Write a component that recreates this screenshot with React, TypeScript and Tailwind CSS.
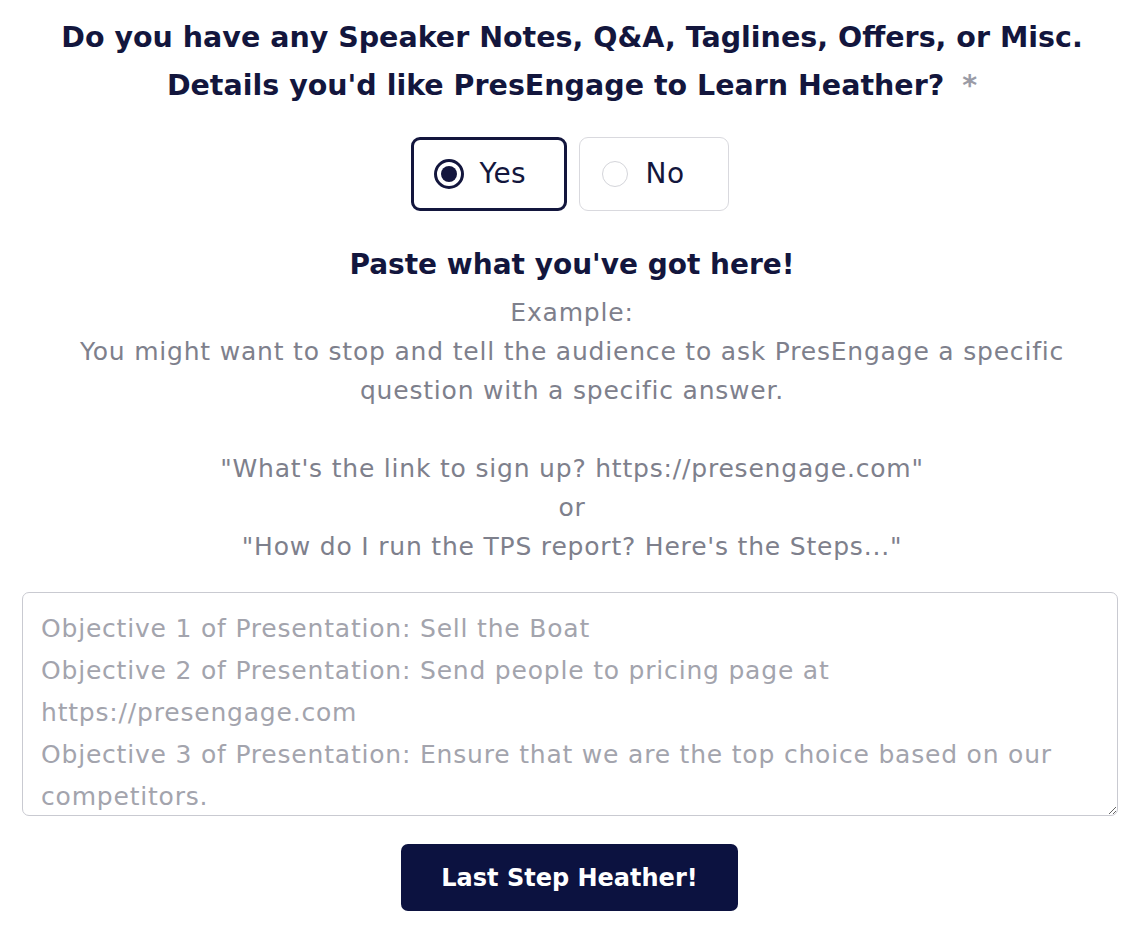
import React, { useState } from 'react';

export default function App() {
  const [choice, setChoice] = useState<'yes' | 'no'>('yes');

  return (
    <div className="min-h-[932px] bg-white px-[22px] pt-[14px] font-['DejaVu_Sans',sans-serif] text-[#13163d]">
      <h1 className="text-center text-[28.5px] font-bold leading-[48px]">
        Do you have any Speaker Notes, Q&amp;A, Taglines, Offers, or Misc.
        <br />
        Details you'd like PresEngage to Learn Heather?{' '}
        <span className="ml-2 text-[#9a9ba6]">*</span>
      </h1>

      <div className="mt-[27px] flex justify-center gap-[12px] pr-[5px]">
        <button
          onClick={() => setChoice('yes')}
          className={
            choice === 'yes'
              ? 'flex h-[74px] w-[156px] items-center gap-[16px] rounded-[9px] border-[3px] border-[#13163d] pl-[20px]'
              : 'flex h-[74px] w-[156px] items-center gap-[16px] rounded-[9px] border border-[#d9d9de] pl-[22px]'
          }
        >
          <span
            className={
              choice === 'yes'
                ? 'flex h-[30px] w-[30px] items-center justify-center rounded-full border-[3px] border-[#13163d]'
                : 'h-[26px] w-[26px] rounded-full border border-[#cfd0d6]'
            }
          >
            {choice === 'yes' && <span className="h-[16px] w-[16px] rounded-full bg-[#13163d]" />}
          </span>
          <span className="text-[28px] tracking-[0.5px]">Yes</span>
        </button>
        <button
          onClick={() => setChoice('no')}
          className={
            choice === 'no'
              ? 'flex h-[74px] w-[150px] items-center gap-[18px] rounded-[9px] border-[3px] border-[#13163d] pl-[20px]'
              : 'flex h-[74px] w-[150px] items-center gap-[18px] rounded-[9px] border border-[#d9d9de] pl-[22px]'
          }
        >
          <span
            className={
              choice === 'no'
                ? 'flex h-[30px] w-[30px] items-center justify-center rounded-full border-[3px] border-[#13163d]'
                : 'h-[26px] w-[26px] rounded-full border border-[#d4d5da]'
            }
          >
            {choice === 'no' && <span className="h-[16px] w-[16px] rounded-full bg-[#13163d]" />}
          </span>
          <span className="text-[28px] tracking-[0.5px]">No</span>
        </button>
      </div>

      <h2 className="mt-[32px] text-center text-[28px] font-bold leading-[44px]">Paste what you've got here!</h2>

      <div className="mt-[6px] text-center text-[25px] leading-[39px] tracking-[0.8px] text-[#7e808c]">
        <p>Example:</p>
        <p>
          You might want to stop and tell the audience to ask PresEngage a specific
          <br />
          question with a specific answer.
        </p>
        <p className="mt-[39px]">"What's the link to sign up? https://presengage.com"</p>
        <p>or</p>
        <p>"How do I run the TPS report? Here's the Steps..."</p>
      </div>

      <textarea
        className="mt-[26px] block h-[224px] w-[1096px] resize-y rounded-[7px] border border-[#c9cad1] px-[18px] py-[15px] text-[25px] leading-[42px] tracking-[0.8px] text-[#13163d] outline-none placeholder:text-[#a3a4ad]"
        placeholder={
          'Objective 1 of Presentation: Sell the Boat\nObjective 2 of Presentation: Send people to pricing page at https://presengage.com\nObjective 3 of Presentation: Ensure that we are the top choice based on our competitors.'
        }
      />

      <div className="mt-[28px] flex justify-center pr-[5px]">
        <button className="h-[67px] w-[337px] rounded-[7px] bg-[#0c1240] text-[24px] font-bold text-white">
          Last Step Heather!
        </button>
      </div>
    </div>
  );
}
